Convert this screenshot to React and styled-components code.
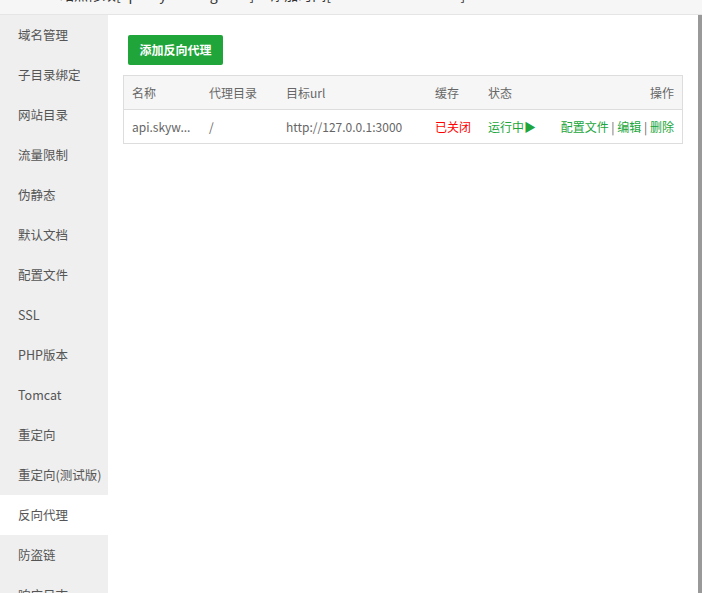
import React from "react";
import styled, { createGlobalStyle } from "styled-components";

const G = createGlobalStyle`
  html,body{margin:0;padding:0;background:#fff;font-family:"Microsoft YaHei","Noto Sans CJK SC",sans-serif;}
`;
const Page = styled.div`width:702px;height:593px;display:flex;flex-direction:column;overflow:hidden;position:relative;`;
const TitleBar = styled.div`height:14px;background:#f6f6f6;border-bottom:1px solid #e5e5e5;overflow:hidden;
  font-size:14px;color:#333;line-height:14px;padding-left:60px;`;
const TitleText = styled.div`margin-top:-13px;`;
const Body = styled.div`flex:1;display:flex;min-height:0;`;
const Side = styled.div`width:108px;background:#efefef;display:flex;flex-direction:column;`;
const Item = styled.div`height:40px;line-height:40px;padding-left:18px;font-size:12.5px;color:#555;flex-shrink:0;
  background:${p=>p.$active?"#fff":"transparent"};white-space:nowrap;`;
const Main = styled.div`flex:1;padding:20px 0 0 15px;`;
const Btn = styled.div`display:inline-block;margin-left:5px;width:95px;height:30px;line-height:30px;text-align:center;
  background:#20a53a;color:#fff;border-radius:2px;font-size:12px;font-weight:bold;`;
const Table = styled.table`margin-top:10px;width:560px;border-collapse:collapse;border:1px solid #ddd;font-size:12px;`;
const Th = styled.th`height:33px;background:#f6f6f6;font-weight:normal;color:#666;text-align:${p=>p.$r?"right":"left"};
  padding:0 8px;border-bottom:1px solid #ddd;width:${p=>p.$w||"auto"};`;
const Td = styled.td`height:33px;color:${p=>p.$c||"#666"};text-align:${p=>p.$r?"right":"left"};padding:0 8px;white-space:nowrap;`;
const G2 = styled.span`color:#20a53a;`;
const Sep = styled.span`color:#666;`;
const Scroll = styled.div`position:absolute;right:0;top:15px;bottom:0;width:4px;background:#999;`;

const items=["域名管理","子目录绑定","网站目录","流量限制","伪静态","默认文档","配置文件","SSL","PHP版本","Tomcat","重定向","重定向(测试版)","反向代理","防盗链","响应日志"];

export default function App(){
  return <Page><G/>
    <TitleBar><TitleText>站点修改[api.skywalking.com] -- 添加时间[2020-09-01 12:00:00]</TitleText></TitleBar>
    <Body>
      <Side>{items.map(t=><Item key={t} $active={t==="反向代理"}>{t}</Item>)}</Side>
      <Main>
        <Btn>添加反向代理</Btn>
        <Table><thead><tr>
          <Th $w="61px">名称</Th><Th $w="61px">代理目录</Th><Th $w="133px">目标url</Th><Th $w="37px">缓存</Th><Th $w="53px">状态</Th><Th $r>操作</Th>
        </tr></thead><tbody><tr>
          <Td>api.skyw...</Td><Td>/</Td><Td>http://127.0.0.1:3000</Td><Td $c="#f00">已关闭</Td><Td $c="#20a53a">运行中▶</Td>
          <Td $r><G2>配置文件</G2> <Sep>|</Sep> <G2>编辑</G2> <Sep>|</Sep> <G2>删除</G2></Td>
        </tr></tbody></Table>
      </Main>
    </Body>
    <Scroll/>
  </Page>;
}
